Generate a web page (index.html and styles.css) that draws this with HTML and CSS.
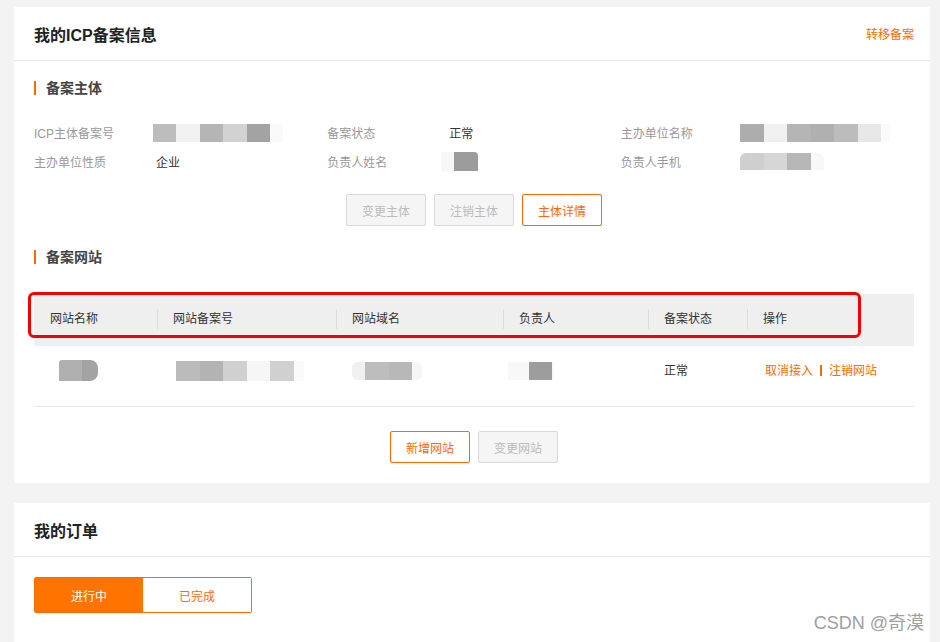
FILE: index.html
```html
<!DOCTYPE html>
<html lang="zh-CN">
<head>
  <meta charset="UTF-8">
  <meta name="viewport" content="width=device-width, initial-scale=1.0">
  <title>我的ICP备案信息</title>
  <link rel="stylesheet" href="styles.css">
</head>
<body>

  <!-- ICP info card -->
  <div class="card">
    <div class="card-head">
      <h2>我的ICP备案信息</h2>
      <a href="#" class="link">转移备案</a>
    </div>

    <div class="card-body">
      <h3 class="section-title">备案主体</h3>

      <div class="info-grid">
        <div class="info-item">
          <span class="label">ICP主体备案号</span>
          <span class="mask mask-icp"></span>
        </div>
        <div class="info-item">
          <span class="label">备案状态</span>
          <span class="value">正常</span>
        </div>
        <div class="info-item">
          <span class="label">主办单位名称</span>
          <span class="mask mask-org"></span>
        </div>
        <div class="info-item">
          <span class="label">主办单位性质</span>
          <span class="value">企业</span>
        </div>
        <div class="info-item">
          <span class="label">负责人姓名</span>
          <span class="mask mask-owner"></span>
        </div>
        <div class="info-item">
          <span class="label">负责人手机</span>
          <span class="mask mask-phone"></span>
        </div>
      </div>

      <div class="btn-row">
        <button class="btn" disabled>变更主体</button>
        <button class="btn" disabled>注销主体</button>
        <button class="btn btn-primary">主体详情</button>
      </div>

      <h3 class="section-title section-site">备案网站</h3>

      <div class="table-wrap">
        <div class="site-table">
          <div class="t-row t-head">
            <div class="t-cell">网站名称</div>
            <div class="t-cell">网站备案号</div>
            <div class="t-cell">网站域名</div>
            <div class="t-cell">负责人</div>
            <div class="t-cell">备案状态</div>
            <div class="t-cell t-last">操作</div>
          </div>
          <div class="t-row t-body">
            <div class="t-cell"><span class="mask mask-site"></span></div>
            <div class="t-cell"><span class="mask mask-siteno"></span></div>
            <div class="t-cell"><span class="mask mask-domain"></span></div>
            <div class="t-cell"><span class="mask mask-person"></span></div>
            <div class="t-cell">正常</div>
            <div class="t-cell t-last ops">
              <a href="#" class="link">取消接入</a><span class="sep"></span><a href="#" class="link">注销网站</a>
            </div>
          </div>
        </div>
        <!-- red annotation box from the screenshot -->
        <div class="highlight"></div>
      </div>

      <div class="btn-row btn-row-site">
        <button class="btn btn-primary">新增网站</button>
        <button class="btn" disabled>变更网站</button>
      </div>
    </div>
  </div>

  <!-- Orders card -->
  <div class="card card-orders">
    <div class="card-head">
      <h2>我的订单</h2>
    </div>
    <div class="card-body">
      <div class="tabs">
        <button class="tab active">进行中</button>
        <button class="tab">已完成</button>
      </div>
    </div>
  </div>

  <div class="watermark">CSDN @奇漠</div>

</body>
</html>
```

FILE: styles.css
```css
html, body {
  height: 642px;
  overflow: hidden;
}

body {
  margin: 0;
  padding: 7px 10px 0 14px;
  background: #f3f3f3;
  font-family: 'Liberation Sans', 'Noto Sans CJK SC', sans-serif;
  font-size: 12px;
  color: #333;
  box-sizing: border-box;
  position: relative;
}

.card {
  background: #fff;
}

.card-orders {
  margin-top: 20px;
  height: 200px;
}

.card-head {
  height: 53px;
  padding: 0 16px 0 20px;
  border-bottom: 1px solid #e8e8e8;
  display: flex;
  justify-content: space-between;
  align-items: center;
}

.card-head h2 {
  margin: 0;
  font-size: 16px;
  font-weight: bold;
  color: #222;
}

.link {
  color: #ff6a00;
  text-decoration: none;
  font-size: 12px;
}

.card-body {
  padding: 0 16px 20px 20px;
}

.section-title {
  margin: 0;
  padding-top: 19px;
  font-size: 14px;
  line-height: 16px;
  font-weight: bold;
  color: #444;
  display: flex;
  align-items: center;
}

.section-title::before {
  content: "";
  width: 2px;
  height: 14px;
  background: #ff6a00;
  margin-right: 10px;
}

.section-site {
  padding-top: 23px;
}

/* subject info */
.info-grid {
  margin-top: 22px;
  display: grid;
  grid-template-columns: repeat(3, 1fr);
  grid-auto-rows: 29px;
}

.info-item {
  display: flex;
  align-items: center;
}

.label {
  width: 122px;
  color: #999;
  flex-shrink: 0;
}

.value {
  color: #333;
}

/* blurred values */
.mask {
  display: inline-block;
  height: 18px;
}

.info-item .mask {
  margin-left: -3px;
}

.mask-icp {
  width: 130px;
  background: linear-gradient(90deg, #bdbdbd 0 23px, #f2f2f2 23px 47px, #b5b5b5 47px 70px, #d2d2d2 70px 94px, #a3a3a3 94px 117px, #fafafa 117px 130px);
}

.mask-org {
  width: 150px;
  background: linear-gradient(90deg, #adadad 0 24px, #f0f0f0 24px 47px, #b5b5b5 47px 71px, #b0b0b0 71px 94px, #bcbcbc 94px 118px, #e8e8e8 118px 141px, #fafafa 141px 150px);
}

.info-item .mask-owner {
  width: 37px;
  height: 19px;
  margin-left: -8px;
  background: linear-gradient(90deg, #f7f7f7 0 13px, #9c9c9c 13px 37px);
  border-radius: 0 4px 0 0;
}

.mask-phone {
  width: 84px;
  height: 17px;
  background: linear-gradient(90deg, #cfcfcf 0 24px, #d6d6d6 24px 47px, #b7b7b7 47px 71px, #f8f8f8 71px 84px);
  border-radius: 6px 6px 0 0;
}

.mask-site {
  width: 39px;
  height: 21px;
  margin-left: 9px;
  background: linear-gradient(90deg, #b0b0b0 0 23px, #a3a3a3 23px 39px);
  border-radius: 3px 8px 8px 0;
}

.mask-siteno {
  width: 128px;
  height: 20px;
  margin-left: 3px;
  background: linear-gradient(90deg, #bbb 0 24px, #b3b3b3 24px 47px, #d0d0d0 47px 71px, #f6f6f6 71px 94px, #d0d0d0 94px 118px, #fafafa 118px 128px);
}

.mask-domain {
  width: 70px;
  height: 18px;
  background: linear-gradient(90deg, #f0f0f0 0 13px, #bdbdbd 13px 37px, #b8b8b8 37px 60px, #f6f6f6 60px 70px);
  border-radius: 6px;
}

.mask-person {
  width: 46px;
  margin-left: -11px;
  background: linear-gradient(90deg, #f8f8f8 0 21px, #9d9d9d 21px 44px, #f8f8f8 44px 46px);
}

/* buttons */
.btn-row {
  margin-top: 18px;
  display: flex;
  justify-content: center;
  gap: 8px;
}

.btn-row-site {
  margin-top: 24px;
}

.btn {
  width: 80px;
  height: 32px;
  font-family: inherit;
  font-size: 12px;
  background: #f5f5f5;
  border: 1px solid #d9d9d9;
  border-radius: 2px;
  color: #bbb;
  padding: 0;
}

.btn-primary {
  background: #fff;
  border-color: #ff6a00;
  color: #ff6a00;
  cursor: pointer;
}

/* site table */
.table-wrap {
  position: relative;
  margin-top: 29px;
}

.t-row {
  display: grid;
  grid-template-columns: 123px 179px 167px 145px 99px 1fr;
}

.t-head {
  height: 52px;
  background: #efefef;
  align-items: center;
}

.t-head .t-cell {
  height: 20px;
  line-height: 20px;
  margin-top: -2px;
  padding-left: 16px;
}

.t-head .t-cell + .t-cell {
  border-left: 1px solid #dcdcdc;
  padding-left: 15px;
}

.t-head .t-last {
  padding-left: 17px;
}

.t-body {
  height: 60px;
  border-bottom: 1px solid #e8e8e8;
}

.t-body .t-cell {
  padding: 14px 0 0 16px;
  line-height: 20px;
  display: flex;
  align-items: center;
  height: 21px;
}

.t-body .t-last {
  padding-left: 18px;
}

.ops .sep {
  width: 2px;
  height: 11px;
  background: #ff6a00;
  margin: 0 7px 0 7px;
}

.highlight {
  position: absolute;
  left: -6px;
  top: -2px;
  width: 827px;
  height: 40px;
  border: 3px solid #f50000;
  border-radius: 6px;
}

/* order tabs */
.tabs {
  margin-top: 20px;
  display: flex;
  width: 218px;
  box-sizing: border-box;
  border: 1px solid #ff6a00;
  border-radius: 2px;
}

.tab {
  flex: 1;
  height: 34px;
  border: none;
  background: #fff;
  color: #ff6a00;
  font-family: inherit;
  font-size: 12px;
  padding: 0;
}

.tab.active {
  background: #ff7300;
  color: #fff;
}

.watermark {
  position: absolute;
  right: 16px;
  bottom: 8px;
  font-size: 18px;
  color: #a0a0a0;
  text-shadow: 0 0 2px #fff;
}
```
